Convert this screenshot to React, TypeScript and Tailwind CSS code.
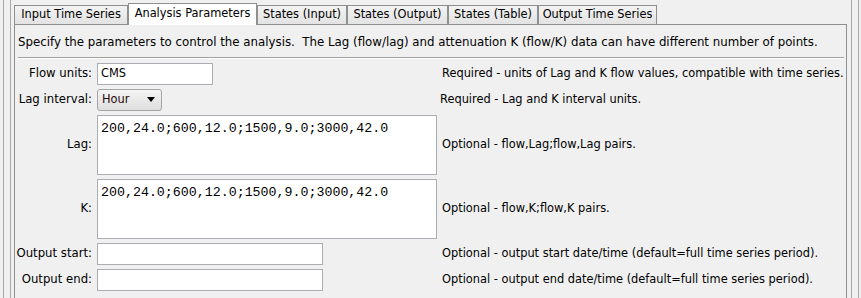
import React from 'react'

const tabs = [
    { label: 'Input Time Series', w: 'w-[114px]' },
    { label: 'Analysis Parameters', w: 'w-[129px]', active: true },
    { label: 'States (Input)', w: 'w-[90px]' },
    { label: 'States (Output)', w: 'w-[101px]' },
    { label: 'States (Table)', w: 'w-[90px]' },
    { label: 'Output Time Series', w: 'w-[119px]' },
]

const pairs = '200,24.0;600,12.0;1500,9.0;3000,42.0'

function Row({ label, h, help, helpPad = 'pl-[5px]', children }: { label: string; h: string; help: string; helpPad?: string; children: React.ReactNode }) {
    return (
        <div className={`flex items-center ${h}`}>
            <div className="w-[82px] shrink-0 pr-[5px] text-right whitespace-nowrap text-[11.7px]">{label}</div>
            <div className="w-[340px] shrink-0 h-full flex items-stretch">{children}</div>
            <div className={`${helpPad} whitespace-nowrap text-[11.4px]`}>{help}</div>
        </div>
    )
}

export default function App() {
    return (
        <div className="w-[861px] h-[298px] bg-[#f0f0f0] overflow-hidden text-[11.8px] text-black leading-none" style={{ fontFamily: '"DejaVu Sans", Tahoma, sans-serif' }}>
            <div className="ml-[3px] mr-[2px] h-full border-x border-[#a8a8a8]">
                <div className="ml-[6px] mr-[6px] h-full border-x border-[#a8a8a8] pl-[3px] pr-[4px]">

                    {/* Tabs */}
                    <div className="flex items-end h-[24px] relative z-10 text-[11.4px]">
                        {tabs.map(t =>
                            t.active ? (
                                <div key={t.label} className={`${t.w} h-[22px] -mb-px bg-white border border-b-0 border-[#8e8f8f] flex items-center justify-center pb-[2px] whitespace-nowrap`}>
                                    {t.label}
                                </div>
                            ) : (
                                <div key={t.label} className={`${t.w} h-[19px] bg-linear-to-b from-[#f3f3f3] to-[#e3e3e3] border border-b-0 border-[#8e8f8f] flex items-center justify-center whitespace-nowrap`}>
                                    {t.label}
                                </div>
                            )
                        )}
                    </div>

                    {/* Panel */}
                    <div className="h-[300px] border border-[#8e8f8f] bg-[#f0f0f0]">
                        <div className="pl-[3px] pr-[2px] pt-[12px]">
                            <div className="pb-[8px] whitespace-nowrap">Specify the parameters to control the analysis.&nbsp; The Lag (flow/lag) and attenuation K (flow/K) data can have different number of points.</div>
                            <div className="border-t border-[#a0a0a0] border-b border-b-white" />
                        </div>

                        <div className="pt-[4px] flex flex-col gap-[4px]">
                            <Row label="Flow units:" h="h-[22px]" help="Required - units of Lag and K flow values, compatible with time series.">
                                <div className="w-[116px] bg-white border border-[#abadb3] flex items-center pl-[3px] text-[11.4px]">CMS</div>
                            </Row>
                            <Row label="Lag interval:" h="h-[22px]" help="Required - Lag and K interval units." helpPad="pl-[3px]">
                                <div className="w-[65px] rounded-[3px] border border-[#a5a5a5] bg-linear-to-b from-[#f4f4f4] to-[#dedede] flex items-center justify-between pl-[4px] pr-[6px] text-[11.4px]">
                                    <span className="text-[#2a0a0a]">Hour</span>
                                    <svg width="8" height="5" viewBox="0 0 8 5"><path d="M0 0h8L4 5z" fill="#000" /></svg>
                                </div>
                            </Row>
                            <Row label="Lag:" h="h-[60px]" help="Optional - flow,Lag;flow,Lag pairs.">
                                <div className="w-[340px] bg-white border border-[#abadb3] pl-[3px] pt-[6px] text-[13.3px]" style={{ fontFamily: '"Liberation Mono", monospace' }}>{pairs}</div>
                            </Row>
                            <Row label="K:" h="h-[60px]" help="Optional - flow,K;flow,K pairs.">
                                <div className="w-[340px] bg-white border border-[#abadb3] pl-[3px] pt-[6px] text-[13.3px]" style={{ fontFamily: '"Liberation Mono", monospace' }}>{pairs}</div>
                            </Row>
                            <Row label="Output start:" h="h-[22px]" help="Optional - output start date/time (default=full time series period).">
                                <div className="w-[226px] bg-white border border-[#abadb3]" />
                            </Row>
                            <Row label="Output end:" h="h-[22px]" help="Optional - output end date/time (default=full time series period).">
                                <div className="w-[226px] bg-white border border-[#abadb3]" />
                            </Row>
                        </div>
                    </div>
                </div>
            </div>
        </div>
    )
}
